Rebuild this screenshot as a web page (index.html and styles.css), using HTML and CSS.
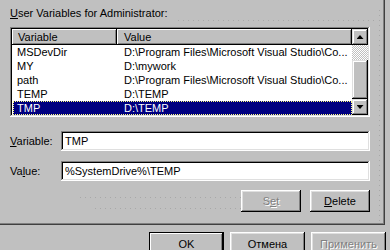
FILE: index.html
```html
<!DOCTYPE html>
<html lang="en">
<head>
  <meta charset="UTF-8" />
  <title>Environment Variables</title>
  <link rel="stylesheet" href="styles.css">
</head>
<body>
  <div class="tab-page">
    <div class="group-head">
      <span class="caption"><u>U</u>ser Variables for Administrator:</span>
      <span class="dots"></span>
    </div>

    <div class="listview">
      <div class="lv-body">
        <div class="lv-header">
          <div class="hd-cell col-name">Variable</div>
          <div class="hd-cell col-value">Value</div>
        </div>
        <div class="lv-row"><span class="col-name">MSDevDir</span><span class="col-value">D:\Program Files\Microsoft Visual Studio\Co...</span></div>
        <div class="lv-row"><span class="col-name">MY</span><span class="col-value">D:\mywork</span></div>
        <div class="lv-row"><span class="col-name">path</span><span class="col-value">D:\Program Files\Microsoft Visual Studio\Co...</span></div>
        <div class="lv-row"><span class="col-name">TEMP</span><span class="col-value">D:\TEMP</span></div>
        <div class="lv-row selected"><span class="col-name">TMP</span><span class="col-value">D:\TEMP</span></div>
      </div>
      <div class="scrollbar">
        <div class="sb-btn"><span class="arrow up"></span></div>
        <div class="sb-track"></div>
        <div class="sb-thumb"></div>
        <div class="sb-btn"><span class="arrow down"></span></div>
      </div>
    </div>

    <div class="field-row first">
      <span class="field-label"><u>V</u>ariable:</span>
      <div class="textbox">TMP</div>
    </div>
    <div class="field-row">
      <span class="field-label">Va<u>l</u>ue:</span>
      <div class="textbox">%SystemDrive%\TEMP</div>
    </div>

    <div class="button-row">
      <span class="filler"></span>
      <button class="btn disabled">S<u>e</u>t</button>
      <button class="btn"><u>D</u>elete</button>
    </div>
  </div>

  <div class="dialog-buttons">
    <button class="btn default">OK</button>
    <button class="btn">Отмена</button>
    <button class="btn disabled">Применить</button>
  </div>
</body>
</html>
```

FILE: styles.css
```css
body {
  margin: 0;
  background: #c0c0c0;
  color: #000;
  font-family: "Liberation Sans", Arial, sans-serif;
  font-size: 11px;
  overflow: hidden;
}
u {
  text-underline-offset: 1px;
}
.tab-page {
  box-sizing: border-box;
  width: 385px;
  height: 225px;
  padding: 7px 14px 0 10px;
  border-right: 1px solid #404040;
  border-bottom: 1px solid #404040;
  box-shadow: inset -1px -1px #808080;
  background: repeating-linear-gradient(180deg, #a8a8a8 0 1px, transparent 1px 5px) 379px 10px / 1px 212px no-repeat;
}
.group-head {
  display: flex;
  height: 14px;
}
.caption {
  line-height: 13px;
  white-space: nowrap;
}
.dots {
  flex: 1;
  height: 1px;
  align-self: flex-end;
  margin: 0 -8px 0 10px;
  background: repeating-linear-gradient(90deg, #a8a8a8 0 1px, transparent 1px 5px);
}

/* list view */
.listview {
  display: flex;
  width: 360px;
  height: 90px;
  box-sizing: border-box;
  margin-top: 6px;
  padding: 2px;
  box-shadow: inset -1px -1px #fff, inset 1px 1px #808080, inset -2px -2px #dfdfdf, inset 2px 2px #000;
}
.lv-body {
  flex: 1;
  background: #fff;
  overflow: hidden;
}
.lv-header {
  display: flex;
  height: 16px;
  line-height: 16px;
}
.hd-cell {
  background: #c0c0c0;
  box-shadow: inset -1px -1px #000, inset 1px 1px #fff, inset -2px -2px #808080;
}
.col-name {
  width: 105px;
  flex: none;
  box-sizing: border-box;
  padding-left: 5px;
}
.hd-cell.col-name {
  padding-left: 6px;
}
.col-value {
  flex: 1;
  padding-left: 7px;
  white-space: nowrap;
}
.lv-row {
  display: flex;
  height: 14px;
  line-height: 14px;
}
.lv-row.selected {
  background: #000080;
  color: #fff;
  margin-left: 1px;
  outline: 1px dotted #ffff80;
  outline-offset: -1px;
}
.lv-row.selected .col-name {
  width: 104px;
  padding-left: 4px;
}

/* scroll bar */
.scrollbar {
  width: 16px;
  display: flex;
  flex-direction: column;
}
.sb-btn,
.sb-thumb {
  background: #c0c0c0;
  box-shadow: inset -1px -1px #000, inset 1px 1px #dfdfdf, inset -2px -2px #808080, inset 2px 2px #fff;
}
.sb-btn {
  height: 16px;
  display: flex;
  align-items: center;
  justify-content: center;
}
.sb-track {
  height: 15px;
  background: repeating-conic-gradient(#fff 0 25%, #c0c0c0 0 50%) 0 0 / 2px 2px;
}
.sb-thumb {
  flex: 1;
}
.arrow {
  width: 7px;
  height: 4px;
  background: #000;
}
.arrow.up {
  clip-path: polygon(50% 0, 100% 100%, 0 100%);
}
.arrow.down {
  clip-path: polygon(0 0, 100% 0, 50% 100%);
}

/* edit fields */
.field-row {
  display: flex;
  align-items: center;
  margin-top: 10px;
}
.field-row.first {
  margin-top: 14px;
}
.field-label {
  width: 51px;
}
.textbox {
  flex: 1;
  height: 20px;
  line-height: 20px;
  padding-left: 4px;
  background: #fff;
  box-shadow: inset -1px -1px #fff, inset 1px 1px #808080, inset -2px -2px #dfdfdf, inset 2px 2px #000;
}

/* buttons */
.button-row {
  display: flex;
  gap: 9px;
  margin-top: 9px;
}
.filler {
  flex: 1;
  margin: 0 -9px 0 70px;
  background:
    repeating-linear-gradient(90deg, #a8a8a8 0 1px, transparent 1px 5px) 0 7px / 100% 1px no-repeat,
    repeating-linear-gradient(90deg, #a8a8a8 0 1px, transparent 1px 5px) 15px 18px / 100% 1px no-repeat;
}
.btn {
  width: 60px;
  height: 22px;
  padding: 0;
  border: none;
  background: #c0c0c0;
  color: #000;
  font: inherit;
  box-shadow: inset -1px -1px #000, inset 1px 1px #fff, inset -2px -2px #808080, inset 2px 2px #dfdfdf;
}
.btn.disabled {
  color: #808080;
  text-shadow: 1px 1px #fff;
}
.dialog-buttons {
  display: flex;
  justify-content: flex-end;
  gap: 6px;
  padding: 7px 4px 0 0;
}
.dialog-buttons .btn {
  width: 75px;
  height: 23px;
}
.btn.default {
  box-shadow: inset 0 0 0 1px #000, inset -2px -2px #000, inset 2px 2px #fff, inset -3px -3px #808080;
}
```
